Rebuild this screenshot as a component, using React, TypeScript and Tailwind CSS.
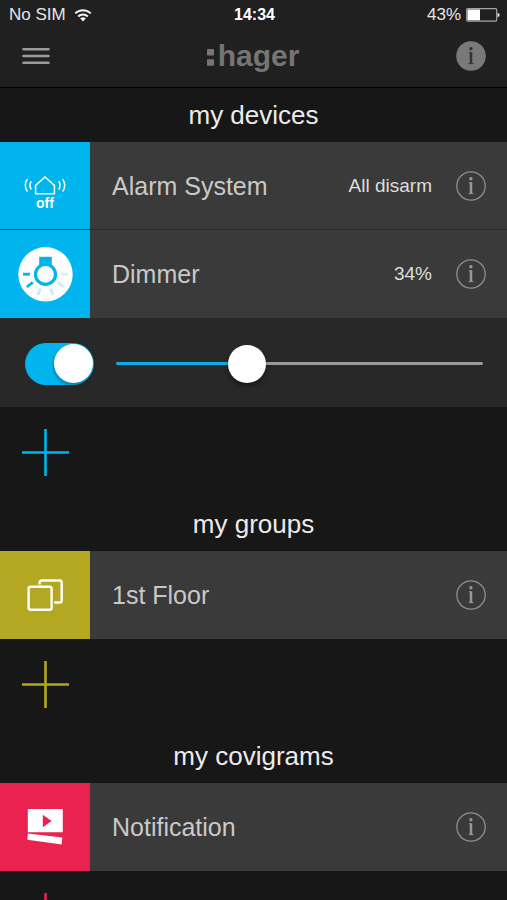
import { useState } from 'react';
import type { ReactNode } from 'react';

function WifiIcon() {
  return (
    <svg width="18" height="14" viewBox="0 0 18 14" fill="none" stroke="#f2f2f2" strokeWidth="2" aria-hidden="true">
      <path d="M1.2 5.4a11 11 0 0 1 15.6 0" />
      <path d="M4.2 8.5a6.8 6.8 0 0 1 9.6 0" />
      <path d="M9 13.4 6.2 10.5a4 4 0 0 1 5.6 0Z" fill="#f2f2f2" stroke="none" />
    </svg>
  );
}

function BatteryIcon() {
  return (
    <svg width="34" height="14" viewBox="0 0 34 14" fill="none" aria-hidden="true">
      <rect x="0.7" y="0.7" width="30" height="12.4" rx="1" stroke="#a5a5a5" strokeWidth="1.2" />
      <rect x="1.5" y="1.5" width="12.5" height="10.8" fill="#fff" />
      <path d="M31.5 5c1.6 0 2 1 2 2s-.4 2-2 2Z" fill="#e5e5e5" />
    </svg>
  );
}

function InfoIcon({ filled = false }: { filled?: boolean }) {
  const ink = filled ? '#333' : '#999';
  return (
    <svg width="30" height="30" viewBox="0 0 30 30" fill="none" aria-hidden="true">
      <circle
        cx="15"
        cy="15"
        r={filled ? 14.8 : 14.2}
        fill={filled ? '#797979' : 'none'}
        stroke={filled ? 'none' : '#8e8e8e'}
        strokeWidth="1.3"
      />
      <circle cx="14.9" cy="7.8" r="1.7" fill={ink} />
      <path d="M12.8 11.8h2.2" stroke={ink} strokeWidth="1" />
      <path d="M15 11.3v11.4" stroke={ink} strokeWidth="2.5" />
      <path d="M12.6 22.6h4.8" stroke={ink} strokeWidth="1" />
    </svg>
  );
}

function AlarmIcon() {
  return (
    <span className="flex flex-col items-center pt-3.5 text-white">
      <svg width="42" height="20" viewBox="0 0 42 20" fill="none" stroke="#fff" strokeWidth="1.5" aria-hidden="true">
        <path d="M11.6 18.8V10.4L21 2l9.4 8.4v8.4Z" />
        <path d="M7.3 6.2c-1.8 2.3-1.8 6 0 8.3M34.7 6.2c1.8 2.3 1.8 6 0 8.3" />
        <path d="M3.4 4.1c-2.8 3.5-2.8 9 0 12.5M38.6 4.1c2.8 3.5 2.8 9 0 12.5" />
      </svg>
      <span className="text-[14px] leading-4 font-bold">off</span>
    </span>
  );
}

function DimmerIcon() {
  return (
    <svg width="56" height="56" viewBox="0 0 56 56" fill="none" aria-hidden="true">
      <circle cx="28.5" cy="28.3" r="27.2" fill="#fff" />
      <path d="M22.2 10.8h12.6v9H22.2Z" fill="#00b5ee" />
      <circle cx="28.5" cy="28.4" r="10" stroke="#00b5ee" strokeWidth="3.2" fill="#fff" />
      <g strokeWidth="2.8">
        <path d="M6 28.2h7" stroke="#00b5ee" />
        <path d="M9.8 41l6-4.6" stroke="#00b5ee" />
        <path d="M20.8 49l2.6-6.6" stroke="#c5ecfa" />
        <path d="M36 49l-2.6-6.6" stroke="#c5ecfa" />
        <path d="M46.8 41l-6-4.8" stroke="#cfeffb" />
        <path d="M50.8 28.2h-7" stroke="#d6f1fb" />
      </g>
    </svg>
  );
}

function GroupIcon() {
  return (
    <svg width="36" height="32" viewBox="0 0 36 32" fill="none" stroke="#fff" strokeWidth="2.4" aria-hidden="true">
      <rect x="1.6" y="7.8" width="23" height="23" rx="2" />
      <path d="M12.6 5.5v-2a2 2 0 0 1 2-2h18.1a2 2 0 0 1 2 2v18a2 2 0 0 1-2 2h-5.5" />
    </svg>
  );
}

function CovigramIcon() {
  return (
    <svg width="36" height="36" viewBox="0 0 36 36" aria-hidden="true">
      <path d="M.8 0h35v23.2H.8Z" fill="#fff" />
      <path d="M15.8 5.8v12.4l8.8-6.2Z" fill="#e9224f" />
      <path d="M.9 24.4 35.3 28.6 34.6 35.6 .3 30.8Z" fill="#fff" />
    </svg>
  );
}

interface TileProps {
  name: string;
  tile: string;
  icon: ReactNode;
  status?: string;
}

function Tile({ name, tile, icon, status }: TileProps) {
  return (
    <div className="flex h-[88px] items-stretch bg-[#3a3a3a]">
      <div className={`flex w-[90px] shrink-0 items-center justify-center ${tile}`}>{icon}</div>
      <div className="flex min-w-0 flex-1 items-center pr-[21px] pl-[22px]">
        <h3 className="flex-1 truncate text-[25px] leading-8 text-[#c9c9c9]">{name}</h3>
        {status && <span className="text-[19px] leading-6 text-[#dedede]">{status}</span>}
        <button className="ml-6 shrink-0 cursor-pointer" aria-label={`${name} info`}>
          <InfoIcon />
        </button>
      </div>
    </div>
  );
}

function SectionTitle({ children }: { children: ReactNode }) {
  return <h2 className="flex h-[54px] items-center justify-center text-[26px] leading-8 text-[#ececec]">{children}</h2>;
}

function AddButton({ label, color }: { label: string; color: string }) {
  return (
    <button className={`flex size-[90px] cursor-pointer items-center justify-center ${color}`} aria-label={label}>
      <svg width="47" height="47" viewBox="0 0 47 47" stroke="currentColor" strokeWidth="2.6" aria-hidden="true">
        <path d="M23.5 0v47M0 23.5h47" />
      </svg>
    </button>
  );
}

export default function App() {
  const [on, setOn] = useState(true);
  const [level, setLevel] = useState(34);

  // The fill ends under the middle of the 38px thumb
  const fill = `calc(19px + (100% - 38px) * ${level / 100})`;

  return (
    <div className="flex h-screen flex-col bg-[#171717] font-['Liberation_Sans',Arial,sans-serif]">
      <header className="h-[88px] shrink-0 border-b border-black bg-[#202020]">
        {/* Status bar */}
        <div className="grid h-[30px] grid-cols-3 items-center pr-[7px] pl-[9px] text-[17px] leading-5 text-[#e6e6e6]">
          <span className="flex items-center gap-2">
            No SIM
            <WifiIcon />
          </span>
          <span className="text-center text-[16px] font-bold text-white">14:34</span>
          <span className="flex items-center justify-end gap-[5px]">
            43%
            <BatteryIcon />
          </span>
        </div>

        {/* Nav bar */}
        <div className="flex h-[52px] items-center justify-between pr-[21px] pl-[22px]">
          <button className="cursor-pointer" aria-label="Menu">
            <svg width="28" height="18" viewBox="0 0 28 18" stroke="#9b9b9b" strokeWidth="2.6" strokeLinecap="round">
              <path d="M1.5 2.3h25M1.5 9h25M1.5 15.7h25" />
            </svg>
          </button>
          <h1 className="flex items-baseline gap-1 text-[30px] leading-8 font-bold text-[#757575]">
            <svg width="7" height="17" viewBox="0 0 7 17" fill="currentColor" aria-hidden="true">
              <rect width="7" height="6.6" rx="0.8" />
              <rect y="10.2" width="7" height="6.6" rx="0.8" />
            </svg>
            hager
          </h1>
          <button className="cursor-pointer" aria-label="About">
            <InfoIcon filled />
          </button>
        </div>
      </header>

      <main className="flex-1 overflow-y-auto [scrollbar-width:none]">
        <section>
          <SectionTitle>my devices</SectionTitle>
          <div className="divide-y divide-[#2b2b2b]">
            <Tile name="Alarm System" tile="bg-[#00b5ee]" icon={<AlarmIcon />} status="All disarm" />
            <Tile name="Dimmer" tile="bg-[#00b5ee]" icon={<DimmerIcon />} status={`${level}%`} />
          </div>
          <div className="flex h-[89px] items-center gap-[22px] bg-[#282828] pt-0.5 pr-6 pl-[25px]">
            <input
              type="checkbox"
              role="switch"
              aria-label="Dimmer power"
              checked={on}
              onChange={(e) => setOn(e.target.checked)}
              className="flex h-[42px] w-[69px] shrink-0 cursor-pointer appearance-none items-center rounded-full
                         bg-[#555] px-px before:size-[39px] before:rounded-full before:bg-white
                         before:shadow-[0_2px_4px_rgba(0,0,0,0.35)] before:content-['']
                         checked:justify-end checked:bg-[#00b5ee]"
            />
            <input
              type="range"
              aria-label="Dimmer level"
              min={0}
              max={100}
              value={level}
              onChange={(e) => setLevel(Number(e.target.value))}
              className="h-[3px] min-w-0 flex-1 cursor-pointer appearance-none rounded-full
                         [&::-webkit-slider-thumb]:size-[38px] [&::-webkit-slider-thumb]:appearance-none
                         [&::-webkit-slider-thumb]:rounded-full [&::-webkit-slider-thumb]:bg-white
                         [&::-webkit-slider-thumb]:shadow-[0_3px_5px_rgba(0,0,0,0.4)]"
              style={{ background: `linear-gradient(to right, #0baee6 ${fill}, #9a9a9a ${fill})` }}
            />
          </div>
          <AddButton label="Add device" color="text-[#00b5ee]" />
        </section>

        <section>
          <SectionTitle>my groups</SectionTitle>
          <Tile name="1st Floor" tile="bg-[#b4a822]" icon={<GroupIcon />} />
          <AddButton label="Add group" color="text-[#b4a822]" />
        </section>

        <section>
          <SectionTitle>my covigrams</SectionTitle>
          <Tile name="Notification" tile="bg-[#e9224f]" icon={<CovigramIcon />} />
          <AddButton label="Add covigram" color="text-[#e9224f]" />
        </section>
      </main>
    </div>
  );
}
